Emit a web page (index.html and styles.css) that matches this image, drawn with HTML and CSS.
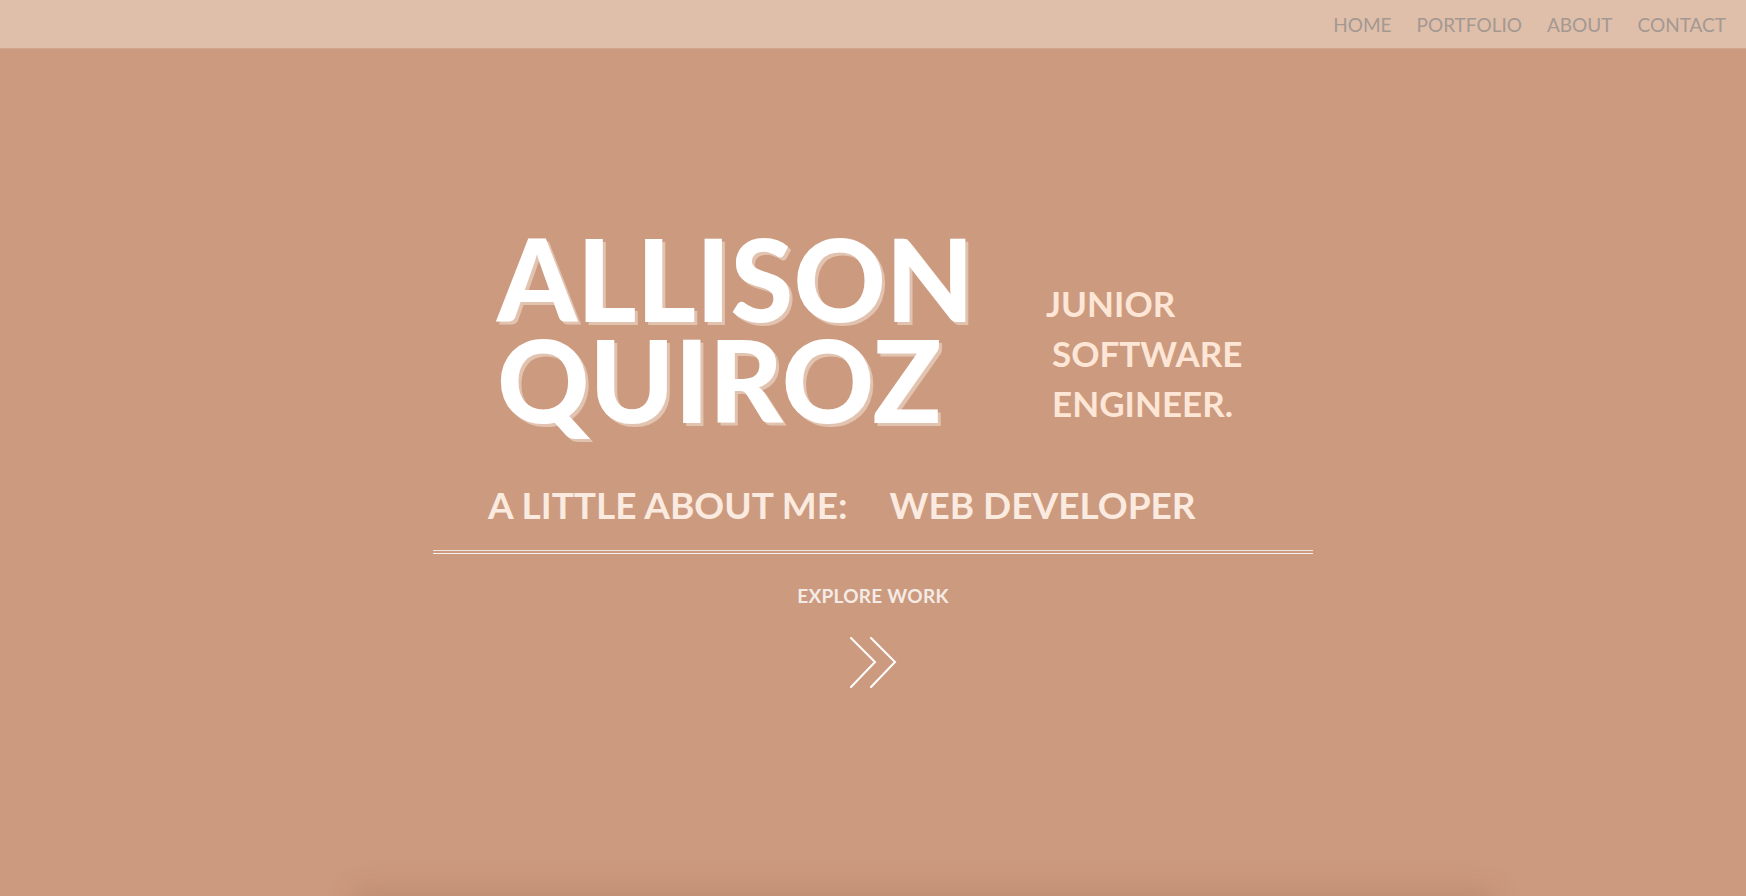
FILE: index.html
```html
<!DOCTYPE html>
<html lang="en">
<head>
<meta charset="utf-8">
<title>Allison Quiroz</title>
<link rel="stylesheet" href="styles.css">
</head>
<body>
<header class="topbar">
  <nav class="nav">
    <a class="nav-link" href="#">HOME</a>
    <a class="nav-link" href="#">PORTFOLIO</a>
    <a class="nav-link" href="#">ABOUT</a>
    <a class="nav-link" href="#">CONTACT</a>
  </nav>
</header>
<main class="hero">
  <div class="hero-inner">
    <div class="intro">
      <h1 class="name"><span>ALLISON</span><span>QUIROZ</span></h1>
      <p class="role"><span class="role-first">JUNIOR</span><span>SOFTWARE</span><span>ENGINEER.</span></p>
    </div>
    <div class="about">
      <span>A LITTLE ABOUT ME:</span>
      <span>WEB DEVELOPER</span>
    </div>
    <hr class="divider">
    <a class="explore" href="#">EXPLORE WORK</a>
    <a class="chevrons" href="#" aria-label="Explore work">
      <svg width="48" height="52" viewBox="0 0 48 52" fill="none" stroke="#ffffff" stroke-width="2" stroke-linecap="round">
        <path d="M2 1 L26 25 L2 50"/>
        <path d="M22 1 L46 25 L22 50"/>
      </svg>
    </a>
  </div>
</main>
<section class="next"></section>
</body>
</html>
```
FILE: styles.css
```css
* { box-sizing: border-box; }
html, body { margin: 0; padding: 0; }
body {
  background: #cc9a7f;
  font-family: "Lato", "Noto Sans", sans-serif;
  overflow: hidden;
}
.topbar {
  height: 49px;
  background: #dfbfaa;
  border-bottom: 1px solid #d2a68e;
  display: flex;
  align-items: center;
  justify-content: flex-end;
  padding-right: 20px;
}
.nav { display: flex; gap: 25px; }
.nav-link {
  color: #a39892;
  text-decoration: none;
  font-size: 19px;
  font-weight: 400;
}
.hero {
  height: 847px;
  display: flex;
  justify-content: center;
}
.hero-inner {
  width: 880px;
  padding-top: 178px;
  display: flex;
  flex-direction: column;
  align-items: stretch;
}
.intro {
  display: flex;
  align-items: flex-end;
  padding-left: 64px;
}
.name {
  margin: 0;
  display: flex;
  flex-direction: column;
  color: #ffffff;
  font-size: 114px;
  font-weight: 900;
  line-height: 101px;
  text-shadow: 3px 3px 0 #e2c3b0;
}
.role {
  margin: 0 0 1px 72px;
  display: flex;
  flex-direction: column;
  color: #fde6d6;
  font-size: 35px;
  font-weight: 700;
  line-height: 50px;
}
.role span { padding-left: 6px; }
.role .role-first { padding-left: 0; }
.about {
  display: flex;
  gap: 42px;
  padding-left: 55px;
  margin-top: 53px;
  color: #fbeadf;
  font-size: 37px;
  font-weight: 700;
}
.divider {
  margin: 23px 0 0;
  height: 4px;
  border: 0;
  border-top: 1px solid #efe5e0;
  border-bottom: 1px solid #f7efeb;
}
.explore {
  align-self: center;
  margin-top: 30px;
  color: #f4ebe6;
  text-decoration: none;
  font-size: 19px;
  font-weight: 700;
  letter-spacing: 0.3px;
}
.chevrons {
  align-self: center;
  margin-top: 30px;
  display: block;
  line-height: 0;
}
.next {
  width: 1140px;
  height: 300px;
  margin: 0 0 0 calc(50% - 520px);
  background: #cc9a7f;
  box-shadow: 0 -6px 28px rgba(120, 70, 40, 0.18);
}
```
